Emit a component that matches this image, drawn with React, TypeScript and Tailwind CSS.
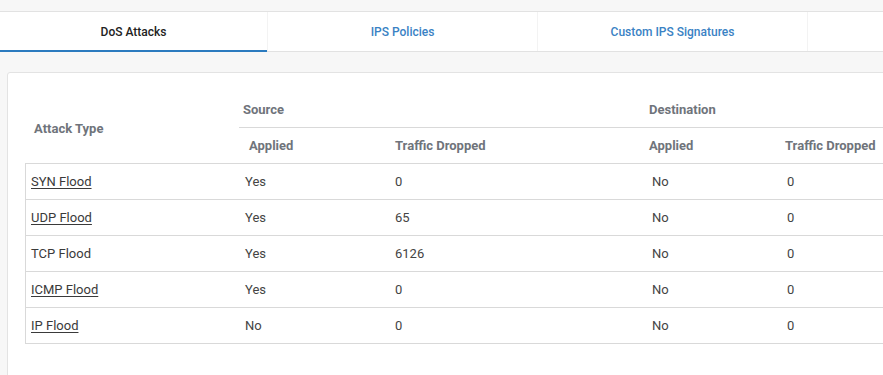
import React from "react";

const rows = [
  { name: "SYN Flood", link: true, sa: "Yes", sd: "0", da: "No", dd: "0" },
  { name: "UDP Flood", link: true, sa: "Yes", sd: "65", da: "No", dd: "0" },
  { name: "TCP Flood", link: false, sa: "Yes", sd: "6126", da: "No", dd: "0" },
  { name: "ICMP Flood", link: true, sa: "Yes", sd: "0", da: "No", dd: "0" },
  { name: "IP Flood", link: true, sa: "No", sd: "0", da: "No", dd: "0" },
];

export default function App() {
  return (
    <div
      className="w-[883px] h-[375px] overflow-hidden bg-[#f7f7f7] text-[#333]"
      style={{ fontFamily: "Roboto, 'Liberation Sans', sans-serif" }}
    >
      <div className="h-[11px] bg-[#f7f7f7]" />
      <div className="flex h-[41px] bg-white border-t border-b border-[#e2e2e2] w-[1200px]">
        <div className="relative w-[267px] flex items-center justify-center text-[12px] font-medium text-[#222]">
          DoS Attacks
          <div className="absolute left-0 right-0 -bottom-px h-[2px] bg-[#2b7bbf]" />
        </div>
        <div className="w-[270px] flex items-center justify-center text-[12px] font-medium text-[#3a82c4] border-l border-[#f3f3f3]">
          IPS Policies
        </div>
        <div className="w-[270px] flex items-center justify-center text-[12px] font-medium text-[#3a82c4] border-l border-[#f3f3f3]">
          Custom IPS Signatures
        </div>
        <div className="w-[270px] border-l border-[#f3f3f3]" />
      </div>
      <div className="pt-[20px] pl-[7px]">
        <div className="w-[1000px] h-[320px] bg-white border border-[#e3e3e3] rounded-tl-[3px] pt-[19px] pl-[17px]">
          <div className="grid grid-cols-[214px_150px_254px_136px_200px] text-[13px]">
            <div className="row-span-2 flex items-center pl-[9px] pt-[2px] font-bold text-[#6f747b] border-b border-[#d9d9d9]">
              Attack Type
            </div>
            <div className="col-span-2 h-[36px] flex items-center pl-[4px] font-bold text-[#6f747b] border-b border-[#d9d9d9]">
              Source
            </div>
            <div className="col-span-2 h-[36px] flex items-center pl-[6px] font-bold text-[#6f747b] border-b border-[#d9d9d9]">
              Destination
            </div>
            <div className="h-[36px] flex items-center pl-[10px] font-bold text-[#6f747b] border-b border-[#d9d9d9]">
              Applied
            </div>
            <div className="h-[36px] flex items-center pl-[6px] font-bold text-[#6f747b] border-b border-[#d9d9d9]">
              Traffic Dropped
            </div>
            <div className="h-[36px] flex items-center pl-[6px] font-bold text-[#6f747b] border-b border-[#d9d9d9]">
              Applied
            </div>
            <div className="h-[36px] flex items-center pl-[6px] font-bold text-[#6f747b] border-b border-[#d9d9d9]">
              Traffic Dropped
            </div>
            {rows.map((r) => (
              <React.Fragment key={r.name}>
                <div className="h-[36px] flex items-center pl-[5px] border-l border-b border-[#d9d9d9] text-[#3a3a3a]">
                  <span className={r.link ? "underline underline-offset-2" : ""}>{r.name}</span>
                </div>
                <div className="h-[36px] flex items-center pl-[6px] border-b border-[#d9d9d9] text-[#444]">
                  {r.sa}
                </div>
                <div className="h-[36px] flex items-center pl-[6px] border-b border-[#d9d9d9] text-[#444]">
                  {r.sd}
                </div>
                <div className="h-[36px] flex items-center pl-[9px] border-b border-[#d9d9d9] text-[#444]">
                  {r.da}
                </div>
                <div className="h-[36px] flex items-center pl-[8px] border-b border-[#d9d9d9] text-[#444]">
                  {r.dd}
                </div>
              </React.Fragment>
            ))}
          </div>
        </div>
      </div>
    </div>
  );
}
